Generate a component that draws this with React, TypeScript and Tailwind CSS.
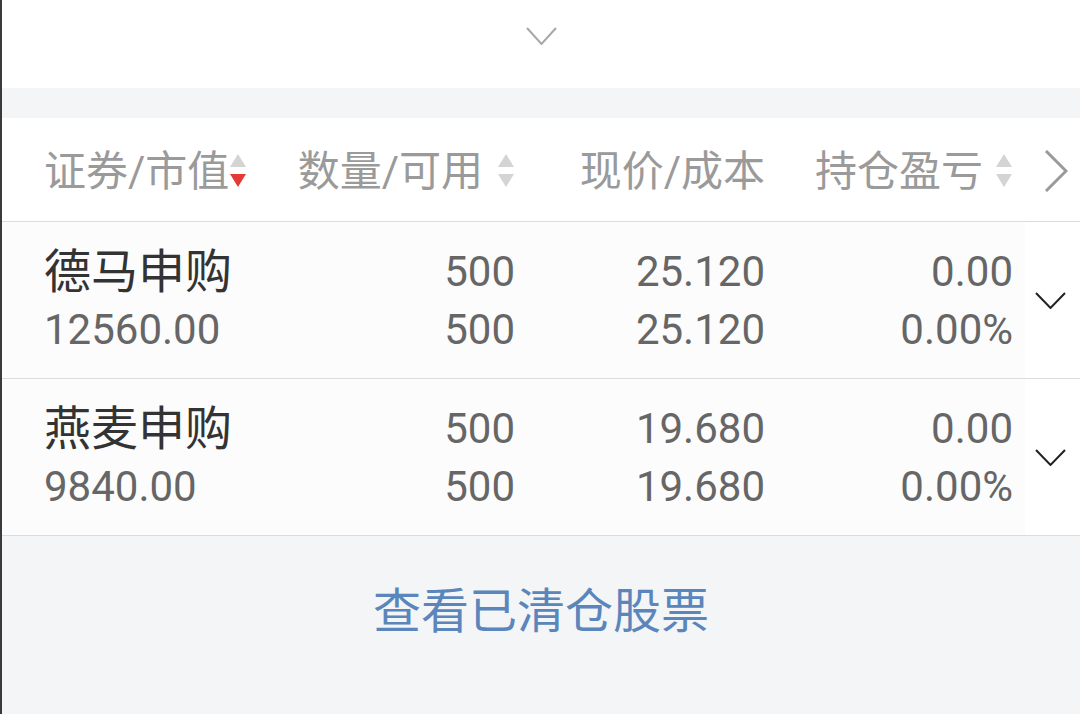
import React from 'react';

type Holding = {
  name: string;
  value: string;
  qty: string;
  avail: string;
  price: string;
  cost: string;
  pnl: string;
  pnlPct: string;
};

const holdings: Holding[] = [
  { name: '德马申购', value: '12560.00', qty: '500', avail: '500', price: '25.120', cost: '25.120', pnl: '0.00', pnlPct: '0.00%' },
  { name: '燕麦申购', value: '9840.00', qty: '500', avail: '500', price: '19.680', cost: '19.680', pnl: '0.00', pnlPct: '0.00%' },
];

const font = { fontFamily: 'Roboto, "Noto Sans CJK SC", sans-serif' };

const SortIcon = ({ active }: { active?: boolean }) => (
  <svg width="18" height="36" viewBox="0 0 18 36" className="shrink-0">
    <polygon points="9,1 1,14 17,14" fill="#d4d4d4" />
    <polygon points="1,21 17,21 9,34" fill={active ? '#e53935' : '#d4d4d4'} />
  </svg>
);

const Chevron = ({ color, w, h, sw }: { color: string; w: number; h: number; sw: number }) => (
  <svg width={w} height={h} viewBox={`0 0 ${w} ${h}`} fill="none">
    <polyline points={`1,1 ${w / 2},${h - 1} ${w - 1},1`} stroke={color} strokeWidth={sw} />
  </svg>
);

export default function App() {
  return (
    <div className="w-[1080px] h-[714px] bg-white border-l-2 border-[#3a3a3a] flex flex-col overflow-hidden" style={font}>
      {/* collapse handle */}
      <div className="h-[88px] flex justify-center pt-[27px]">
        <Chevron color="#a8a8a8" w={31} h={18} sw={2} />
      </div>
      <div className="h-[30px] bg-[#f4f5f7]" />

      {/* header */}
      <div className="h-[104px] flex items-center border-b border-[#dcdcdc] text-[42px] text-[#9a9a9a] pl-[42px] pt-[3px]">
        <div className="w-[251px] flex items-center">
          <span>证券/市值</span>
          <SortIcon active />
        </div>
        <div className="w-[220px] flex items-center justify-end gap-[14px]">
          <span>数量/可用</span>
          <SortIcon />
        </div>
        <div className="w-[250px] flex justify-end">
          <span>现价/成本</span>
        </div>
        <div className="w-[248px] flex items-center justify-end gap-[12px]">
          <span>持仓盈亏</span>
          <SortIcon />
        </div>
        <div className="flex-1 flex justify-end pr-[12px]">
          <svg width="24" height="42" viewBox="0 0 24 42" fill="none">
            <polyline points="2,1 22,21 2,41" stroke="#9a9a9a" strokeWidth="3" />
          </svg>
        </div>
      </div>

      {/* rows */}
      {holdings.map((h) => (
        <div key={h.name} className="h-[157px] flex border-b border-[#dcdcdc] bg-white">
          <div className="flex bg-[#fcfcfc] pl-[42px] pt-[21px] text-[42px] leading-[58px] text-[#666666]">
            <div className="w-[251px] flex flex-col">
              <span className="text-[47px] text-[#333333]">{h.name}</span>
              <span>{h.value}</span>
            </div>
            <div className="w-[220px] flex flex-col items-end">
              <span>{h.qty}</span>
              <span>{h.avail}</span>
            </div>
            <div className="w-[250px] flex flex-col items-end">
              <span>{h.price}</span>
              <span>{h.cost}</span>
            </div>
            <div className="w-[248px] flex flex-col items-end">
              <span>{h.pnl}</span>
              <span>{h.pnlPct}</span>
            </div>
            <div className="w-[12px]" />
          </div>
          <div className="flex-1 flex items-center justify-center pr-[4px]">
            <Chevron color="#222222" w={31} h={17} sw={2} />
          </div>
        </div>
      ))}

      {/* footer */}
      <div className="flex-1 bg-[#f4f5f7] flex justify-center pt-[46px]">
        <span className="text-[48px] leading-[60px] text-[#5b86bb]">查看已清仓股票</span>
      </div>
    </div>
  );
}
